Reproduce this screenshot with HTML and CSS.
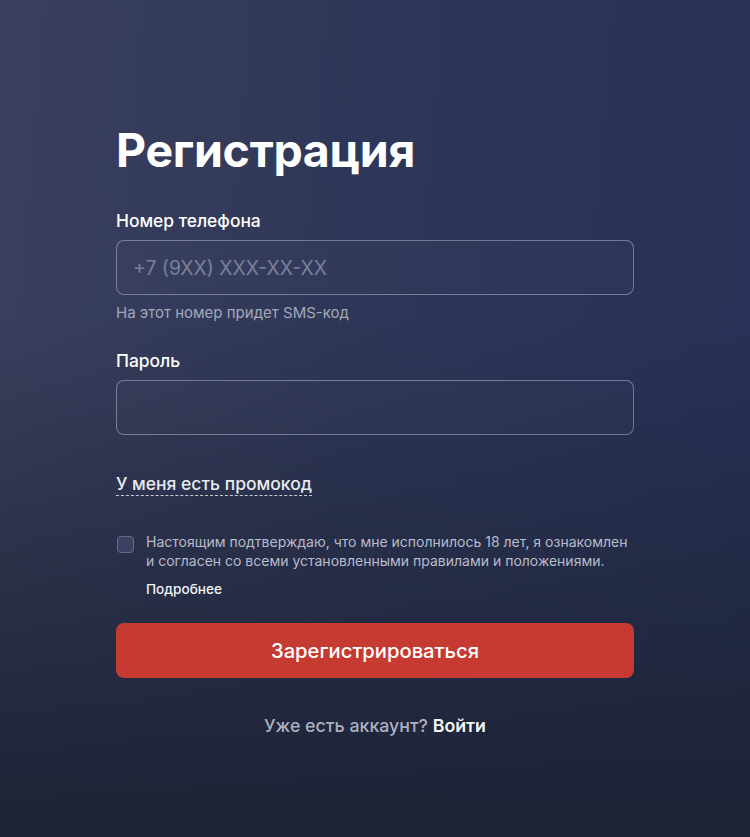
FILE: index.html
```html
<!DOCTYPE html>
<html lang="ru">
<head>
<meta charset="utf-8">
<title>Регистрация</title>
<link rel="stylesheet" href="styles.css">
</head>
<body>
<main class="page">
  <form class="form">
    <h1 class="title">Регистрация</h1>

    <label class="label" for="phone">Номер телефона</label>
    <div class="field"><input id="phone" class="input" type="text" placeholder="+7 (9XX) XXX-XX-XX"></div>
    <p class="hint">На этот номер придет SMS-код</p>

    <label class="label label-pass" for="pass">Пароль</label>
    <div class="field"><input id="pass" class="input" type="password"></div>

    <div class="promo-row"><span class="promo">У меня есть промокод</span></div>

    <div class="agree">
      <span class="checkbox"></span>
      <div class="agree-body">
        <p class="agree-text">Настоящим подтверждаю, что мне исполнилось 18 лет, я ознакомлен и согласен со всеми установленными правилами и положениями.</p>
        <span class="more">Подробнее</span>
      </div>
    </div>

    <button type="button" class="submit">Зарегистрироваться</button>

    <p class="footer">Уже есть аккаунт? <span class="login">Войти</span></p>
  </form>
</main>
</body>
</html>
```

FILE: styles.css
```css
* { box-sizing: border-box; }
html, body { margin: 0; padding: 0; height: 100%; }
body {
  font-family: Inter, "Noto Sans", "Liberation Sans", sans-serif;
  color: #ffffff;
  background:
    linear-gradient(180deg, rgba(29,33,51,0) 0%, rgba(29,33,51,0) 38%, rgba(29,34,52,1) 100%),
    linear-gradient(95deg, #3a3f5d 0%, #2f3758 45%, #273157 100%);
  min-height: 837px;
}
.page {
  display: flex;
  justify-content: center;
  padding-top: 122px;
}
.form {
  width: 518px;
  display: flex;
  flex-direction: column;
}
.title {
  margin: 0;
  font-size: 46.5px;
  line-height: 56px;
  font-weight: 700;
  letter-spacing: -0.3px;
}
.label {
  margin-top: 33px;
  font-size: 17.4px;
  line-height: 20px;
  font-weight: 500;
}
.label-pass { margin-top: 29px; }
.field { margin-top: 9px; }
.input {
  display: block;
  width: 100%;
  height: 55px;
  padding: 0 16px;
  border: 1px solid rgba(200, 206, 230, 0.45);
  border-radius: 8px;
  background: rgba(255,255,255,0.015);
  color: #fff;
  font-family: inherit;
  font-size: 19.4px;
  outline: none;
}
.input::placeholder { color: #7a8099; }
.hint {
  margin: 9px 0 0;
  font-size: 15px;
  line-height: 18px;
  color: #a3a8b9;
}
.promo-row {
  margin-top: 38px;
  line-height: 22px;
}
.promo {
  font-size: 17.5px;
  font-weight: 500;
  color: #e8eaf0;
  border-bottom: 1px dashed #c9ccd8;
  padding-bottom: 1px;
}
.agree {
  margin-top: 38px;
  display: flex;
  gap: 12px;
  align-items: flex-start;
}
.checkbox {
  flex: none;
  width: 17px;
  height: 17px;
  margin-top: 3px;
  margin-left: 1px;
  border-radius: 4px;
  border: 1px solid #646b89;
  background: #3b4262;
}
.agree-body { display: flex; flex-direction: column; }
.agree-text {
  margin: 0;
  font-size: 14px;
  line-height: 18.5px;
  color: #b7bbca;
}
.more {
  margin-top: 11px;
  font-size: 13.6px;
  line-height: 16px;
  font-weight: 500;
  color: #f1f2f6;
}
.submit {
  margin-top: 26px;
  height: 55px;
  border: none;
  border-radius: 8px;
  background: #c53b32;
  color: #fff;
  font-family: inherit;
  font-size: 20.2px;
  font-weight: 500;
  cursor: pointer;
}
.footer {
  margin: 37px 0 0;
  text-align: center;
  font-size: 17.8px;
  line-height: 22px;
  font-weight: 500;
  color: #acb0c0;
}
.login { color: #f4f5f8; font-weight: 600; }
```
